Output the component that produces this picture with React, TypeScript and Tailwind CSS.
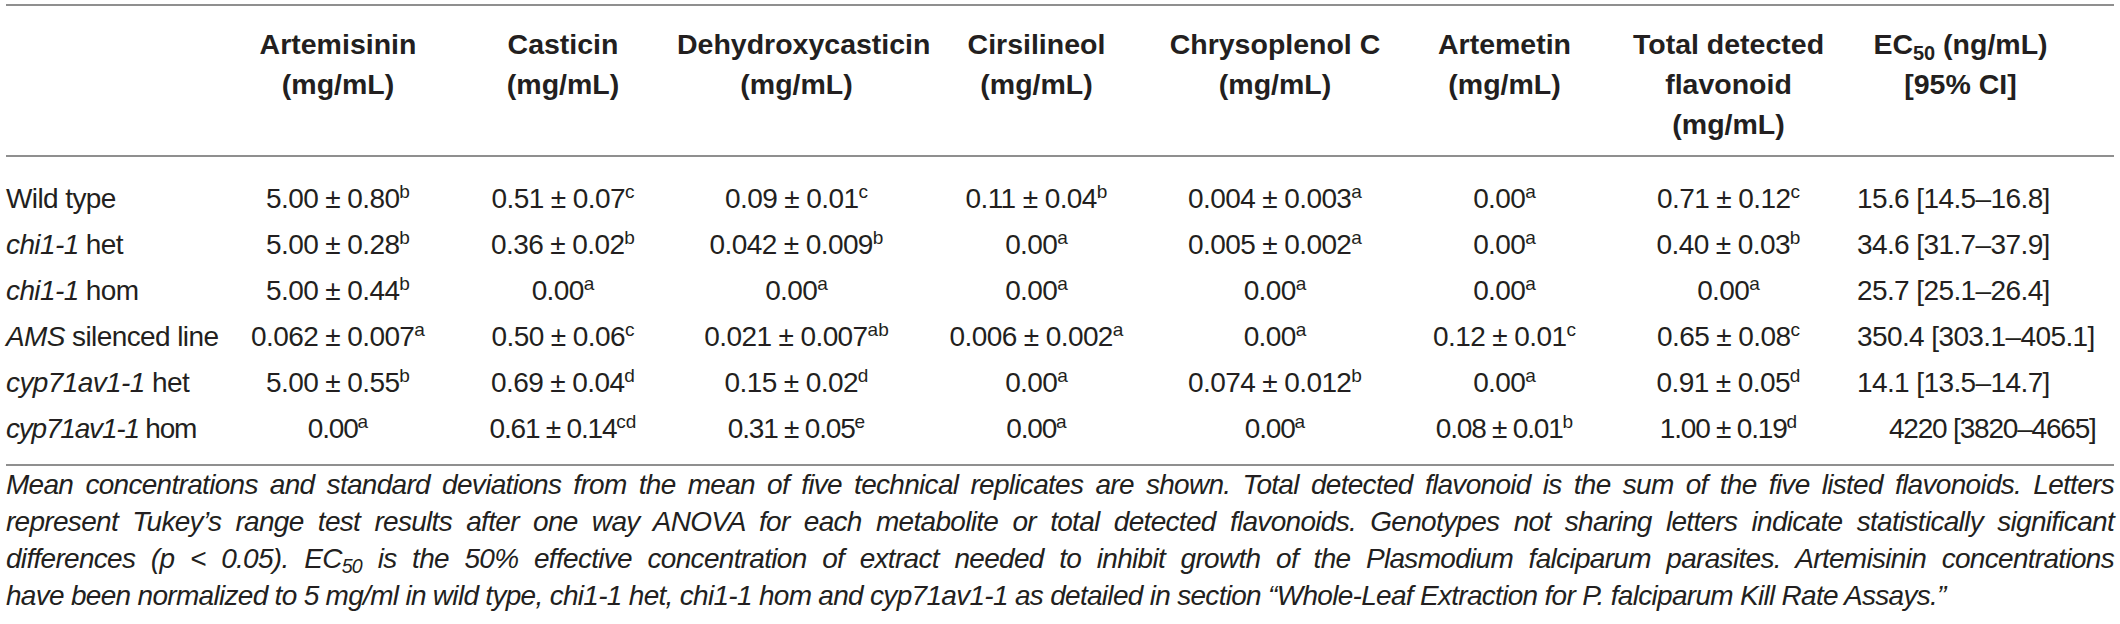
import React from 'react';

type Cell = [string, string];

type Row = {
    label: React.ReactNode;
    cells: Cell[];
    ec: string;
};

const rows: Row[] = [
    {
        label: <>Wild type</>,
        cells: [["5.00 ± 0.80", "b"], ["0.51 ± 0.07", "c"], ["0.09 ± 0.01", "c"], ["0.11 ± 0.04", "b"], ["0.004 ± 0.003", "a"], ["0.00", "a"], ["0.71 ± 0.12", "c"]],
        ec: "15.6 [14.5–16.8]",
    },
    {
        label: <><i>chi1-1</i> het</>,
        cells: [["5.00 ± 0.28", "b"], ["0.36 ± 0.02", "b"], ["0.042 ± 0.009", "b"], ["0.00", "a"], ["0.005 ± 0.002", "a"], ["0.00", "a"], ["0.40 ± 0.03", "b"]],
        ec: "34.6 [31.7–37.9]",
    },
    {
        label: <><i>chi1-1</i> hom</>,
        cells: [["5.00 ± 0.44", "b"], ["0.00", "a"], ["0.00", "a"], ["0.00", "a"], ["0.00", "a"], ["0.00", "a"], ["0.00", "a"]],
        ec: "25.7 [25.1–26.4]",
    },
    {
        label: <><i>AMS</i> silenced line</>,
        cells: [["0.062 ± 0.007", "a"], ["0.50 ± 0.06", "c"], ["0.021 ± 0.007", "ab"], ["0.006 ± 0.002", "a"], ["0.00", "a"], ["0.12 ± 0.01", "c"], ["0.65 ± 0.08", "c"]],
        ec: "350.4 [303.1–405.1]",
    },
    {
        label: <><i>cyp71av1-1</i> het</>,
        cells: [["5.00 ± 0.55", "b"], ["0.69 ± 0.04", "d"], ["0.15 ± 0.02", "d"], ["0.00", "a"], ["0.074 ± 0.012", "b"], ["0.00", "a"], ["0.91 ± 0.05", "d"]],
        ec: "14.1 [13.5–14.7]",
    },
    {
        label: <><i>cyp71av1-1</i> hom</>,
        cells: [["0.00", "a"], ["0.61 ± 0.14", "cd"], ["0.31 ± 0.05", "e"], ["0.00", "a"], ["0.00", "a"], ["0.08 ± 0.01", "b"], ["1.00 ± 0.19", "d"]],
        ec: "4220 [3820–4665]",
    },
];

const headers: React.ReactNode[] = [
    <>Artemisinin<br />(mg/mL)</>,
    <>Casticin<br />(mg/mL)</>,
    <>Dehydroxycasticin<br />(mg/mL)</>,
    <>Cirsilineol<br />(mg/mL)</>,
    <>Chrysoplenol C<br />(mg/mL)</>,
    <>Artemetin<br />(mg/mL)</>,
    <>Total detected<br />flavonoid<br />(mg/mL)</>,
];

// column widths picked so header centres land where the printed table has them
const grid = "grid grid-cols-[221px_222px_228px_239px_241px_236px_223px_225px_1fr]";

const Sup = ({ children }: { children: React.ReactNode }) => (
    <sup className="text-[68%] -top-[0.5em] tracking-normal">{children}</sup>
);

export default function App() {
    return (
        <div className="w-[2120px] h-[624px] bg-white px-[6px] pt-[4px] text-[#231f20] font-['Liberation_Sans',Arial,sans-serif]">
            <div className="border-t-2 border-b-2 border-[#8f8f8f]">
                <div className={`${grid} pt-[18px] pb-[11px] text-[28.5px] leading-[40px] font-bold text-center`}>
                    <div />
                    {headers.map((h, i) => (
                        <div key={i}>{h}</div>
                    ))}
                    <div className="pr-[34px]">
                        EC<sub className="text-[70%] -bottom-[0.3em]">50</sub> (ng/mL)<br />[95% CI]
                    </div>
                </div>
                <div className="border-t-2 border-[#8f8f8f] pt-[19px] pb-[12px] text-[28px] leading-[46px]">
                    {rows.map((r, i) => (
                        <div key={i} className={`${grid} h-[46px] items-center ${i === 5 ? "tracking-[-1.2px]" : "tracking-[-0.6px]"}`}>
                            <div className="whitespace-nowrap">{r.label}</div>
                            {r.cells.map(([v, s], j) => (
                                <div key={j} className="text-center whitespace-nowrap">
                                    {v}<Sup>{s}</Sup>
                                </div>
                            ))}
                            <div className={`whitespace-nowrap ${i === 5 ? "pl-[48px]" : "pl-[16px]"}`}>{r.ec}</div>
                        </div>
                    ))}
                </div>
            </div>
            <div className="italic text-[28px] leading-[37px] tracking-[-0.7px] whitespace-nowrap">
                <p className="text-justify [text-align-last:justify]">
                    Mean concentrations and standard deviations from the mean of five technical replicates are shown. Total detected flavonoid is the sum of the five listed flavonoids. Letters
                </p>
                <p className="text-justify [text-align-last:justify]">
                    represent Tukey’s range test results after one way ANOVA for each metabolite or total detected flavonoids. Genotypes not sharing letters indicate statistically significant
                </p>
                <p className="text-justify [text-align-last:justify]">
                    differences (p &lt; 0.05). EC<sub className="text-[70%]">50</sub> is the 50% effective concentration of extract needed to inhibit growth of the Plasmodium falciparum parasites. Artemisinin concentrations
                </p>
                <p>
                    have been normalized to 5 mg/ml in wild type, chi1-1 het, chi1-1 hom and cyp71av1-1 as detailed in section “Whole-Leaf Extraction for P. falciparum Kill Rate Assays.”
                </p>
            </div>
        </div>
    );
}
